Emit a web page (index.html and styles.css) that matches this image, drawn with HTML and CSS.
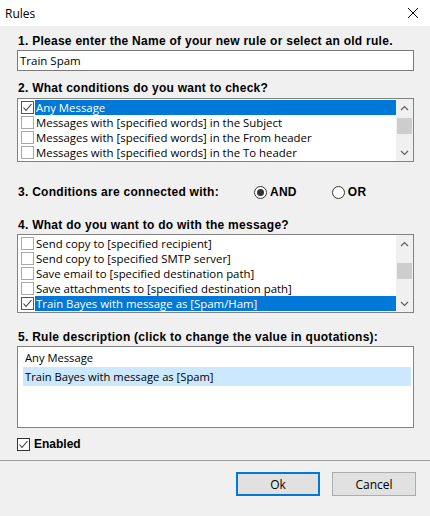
FILE: index.html
```html
<!DOCTYPE html>
<html>
<head>
<meta charset="utf-8">
<link rel="stylesheet" href="styles.css">
</head>
<body>
<div class="window">
  <div class="titlebar">
    <span class="title">Rules</span>
    <svg class="close" width="12" height="12" viewBox="0 0 12 12"><path d="M1 1 L11 11 M11 1 L1 11" stroke="#000" stroke-width="1" fill="none"/></svg>
  </div>
  <div class="content">
    <div class="label l1">1. Please enter the Name of your new rule or select an old rule.</div>
    <div class="textbox">Train Spam</div>

    <div class="label l2">2. What conditions do you want to check?</div>
    <div class="listbox lb2">
      <div class="rows">
        <div class="row selected"><span class="cb checked"><svg width="13" height="13" viewBox="0 0 13 13"><path d="M2.5 6.5 L5 9.5 L10.5 3" stroke="#333" stroke-width="1.1" fill="none"/></svg></span><span class="txt">Any Message</span></div>
        <div class="row"><span class="cb"></span><span class="txt">Messages with [specified words] in the Subject</span></div>
        <div class="row"><span class="cb"></span><span class="txt">Messages with [specified words] in the From header</span></div>
        <div class="row"><span class="cb"></span><span class="txt">Messages with [specified words] in the To header</span></div>
      </div>
      <div class="scrollbar sb2">
        <div class="arrow"><svg width="9" height="6" viewBox="0 0 9 6"><path d="M1 5 L4.5 1.5 L8 5" stroke="#606060" stroke-width="1.2" fill="none"/></svg></div>
        <div class="track"><div class="thumb"></div></div>
        <div class="arrow"><svg width="9" height="6" viewBox="0 0 9 6"><path d="M1 1 L4.5 4.5 L8 1" stroke="#606060" stroke-width="1.2" fill="none"/></svg></div>
      </div>
    </div>

    <div class="radio-row">
      <div class="label l3">3. Conditions are connected with:</div>
      <div class="radio-group">
        <label class="radio"><span class="circle on"><span class="dot"></span></span><span class="rtxt">AND</span></label>
        <label class="radio"><span class="circle"></span><span class="rtxt">OR</span></label>
      </div>
    </div>

    <div class="label l4">4. What do you want to do with the message?</div>
    <div class="listbox lb4">
      <div class="rows">
        <div class="row"><span class="cb"></span><span class="txt">Send copy to [specified recipient]</span></div>
        <div class="row"><span class="cb"></span><span class="txt">Send copy to [specified SMTP server]</span></div>
        <div class="row"><span class="cb"></span><span class="txt">Save email to [specified destination path]</span></div>
        <div class="row"><span class="cb"></span><span class="txt">Save attachments to [specified destination path]</span></div>
        <div class="row selected"><span class="cb checked"><svg width="13" height="13" viewBox="0 0 13 13"><path d="M2.5 6.5 L5 9.5 L10.5 3" stroke="#333" stroke-width="1.1" fill="none"/></svg></span><span class="txt">Train Bayes with message as [Spam/Ham]</span></div>
      </div>
      <div class="scrollbar sb4">
        <div class="arrow"><svg width="9" height="6" viewBox="0 0 9 6"><path d="M1 5 L4.5 1.5 L8 5" stroke="#606060" stroke-width="1.2" fill="none"/></svg></div>
        <div class="track"><div class="thumb"></div></div>
        <div class="arrow"><svg width="9" height="6" viewBox="0 0 9 6"><path d="M1 1 L4.5 4.5 L8 1" stroke="#606060" stroke-width="1.2" fill="none"/></svg></div>
      </div>
    </div>

    <div class="label l5">5. Rule description (click to change the value in quotations):</div>
    <div class="descbox">
      <div class="drow">Any Message</div>
      <div class="drow hl">Train Bayes with message as [Spam]</div>
    </div>

    <label class="enabled">
      <span class="ecb"><svg width="13" height="13" viewBox="0 0 13 13"><path d="M2.5 6.5 L5 9.5 L10.5 3" stroke="#333" stroke-width="1.1" fill="none"/></svg></span>
      <span class="etxt">Enabled</span>
    </label>
  </div>
  <div class="footer">
    <button class="btn ok">Ok</button>
    <button class="btn">Cancel</button>
  </div>
</div>
</body>
</html>
```
FILE: styles.css
```css
html, body {
  margin: 0;
  padding: 0;
  background: #f0f0f0;
}
.window {
  width: 430px;
  height: 516px;
  display: flex;
  flex-direction: column;
  background: #f0f0f0;
  font-family: "Open Sans", "Noto Sans", sans-serif;
  font-size: 11.4px;
  color: #000;
  overflow: hidden;
}
.titlebar {
  height: 26px;
  background: #fff;
  display: flex;
  align-items: center;
  justify-content: space-between;
  padding: 0 11px 0 5px;
  flex-shrink: 0;
}
.title {
  font-size: 12px;
}
.content {
  flex: 1;
  padding: 0 16px 0 17px;
  display: flex;
  flex-direction: column;
}
.label {
  font-family: "Liberation Sans", Arial, sans-serif;
  font-weight: bold;
  font-size: 12px;
  letter-spacing: 0.27px;
  line-height: 14px;
  height: 14px;
  padding-left: 1px;
  white-space: nowrap;
}
.l1 { margin-top: 8px; }
.textbox {
  margin-top: 2px;
  height: 19px;
  border: 1px solid #7a7a7a;
  background: #fff;
  line-height: 19px;
  padding-left: 2px;
  font-size: 11.5px;
}
.l2 { margin-top: 10px; }
.listbox {
  margin-top: 3px;
  border: 1px solid #828282;
  background: #fff;
  display: flex;
}
.lb2 { height: 62px; }
.lb4 { height: 77px; margin-top: 2px; }
.rows {
  flex: 1;
  padding-top: 1px;
}
.row {
  height: 15px;
  display: flex;
  align-items: center;
  white-space: nowrap;
}
.cb {
  width: 11px;
  height: 11px;
  border: 1px solid #a8a8a8;
  margin-left: 3px;
  margin-right: 1px;
  background: #fff;
  flex-shrink: 0;
  position: relative;
}
.cb.checked {
  border-color: #555;
}
.cb svg {
  position: absolute;
  left: -1px;
  top: -1px;
}
.txt {
  flex: 1;
  height: 15px;
  line-height: 15px;
  padding-left: 1px;
}
.row.selected .txt {
  background: #0078d7;
  color: #fff;
}
.scrollbar {
  width: 17px;
  background: #f0f0f0;
  display: flex;
  flex-direction: column;
}
.arrow {
  height: 17px;
  display: flex;
  align-items: center;
  justify-content: center;
}
.track {
  flex: 1;
  position: relative;
}
.thumb {
  position: absolute;
  left: 1px;
  right: 1px;
  background: #cdcdcd;
}
.sb2 .thumb { top: 2px; height: 16px; }
.sb4 .thumb { top: 11px; height: 16px; }
.radio-row {
  margin-top: 23px;
  height: 14px;
  display: flex;
  align-items: center;
}
.l3 { width: 236px; }
.radio-group {
  display: flex;
  align-items: center;
}
.radio {
  display: flex;
  align-items: center;
  margin-right: 35px;
}
.circle {
  width: 11px;
  height: 11px;
  border: 1px solid #333;
  border-radius: 50%;
  background: #fff;
  display: flex;
  align-items: center;
  justify-content: center;
}
.dot {
  width: 7px;
  height: 7px;
  border-radius: 50%;
  background: #333;
}
.rtxt {
  font-family: "Liberation Sans", Arial, sans-serif;
  font-weight: bold;
  font-size: 12px;
  letter-spacing: 0.27px;
  margin-left: 3px;
}
.l4 { margin-top: 19px; }
.l5 { margin-top: 17px; }
.descbox {
  margin-top: 2px;
  height: 79px;
  border: 1px solid #828282;
  background: #fff;
  padding: 1px 2px 0 5px;
}
.drow {
  height: 19px;
  line-height: 19px;
  padding-left: 2px;
  font-size: 11.2px;
}
.drow.hl { background: #cce8ff; }
.enabled {
  margin-top: 9px;
  display: flex;
  align-items: center;
  height: 14px;
}
.ecb {
  width: 11px;
  height: 11px;
  border: 1px solid #333;
  background: #fff;
  position: relative;
}
.ecb svg { position: absolute; left: -1px; top: -1px; }
.etxt {
  font-family: "Liberation Sans", Arial, sans-serif;
  font-weight: bold;
  font-size: 12px;
  margin-left: 4px;
}
.footer {
  height: 44px;
  border-top: 1px solid #a0a0a0;
  display: flex;
  justify-content: flex-end;
  align-items: flex-start;
  padding: 11px 14px 0 0;
  gap: 12px;
  flex-shrink: 0;
}
.btn {
  width: 84px;
  height: 24px;
  background: #e1e1e1;
  border: 1px solid #adadad;
  font-family: "Open Sans", "Noto Sans", sans-serif;
  font-size: 12px;
  color: #000;
  padding: 0;
  margin: 0;
}
.btn.ok {
  border: 2px solid #0078d7;
}
```
